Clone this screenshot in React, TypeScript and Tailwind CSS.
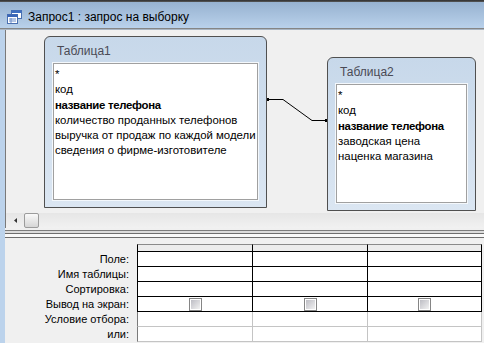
import React from "react";

const font = { fontFamily: '"Liberation Sans", Arial, sans-serif' };

function TableBox({
  title,
  items,
  className,
}: {
  title: string;
  items: { t: string; b?: boolean }[];
  className: string;
}) {
  return (
    <div
      className={
        "absolute flex flex-col border border-[#505050] rounded-t-[6px] bg-gradient-to-b from-[#c7d8ea] to-[#dbe6f2] px-[8px] pb-[7px] " +
        className
      }
    >
      <div className="h-[26px] flex items-center pl-[4px] text-[12px] text-[#4a4a55] pt-[2px]">{title}</div>
      <div className="flex-1 bg-white border border-[#a0a0a0] outline outline-1 outline-[#f4f8fc] pl-[1px] pt-[3px] text-[11.4px] text-black leading-[15.3px]">
        {items.map((it, i) => (
          <div key={i} className={it.b ? "font-bold tracking-[-0.3px] whitespace-nowrap" : "whitespace-nowrap"}>
            {it.t}
          </div>
        ))}
      </div>
    </div>
  );
}

function Checkbox() {
  return (
    <div className="w-[13px] h-[13px] border border-[#858585] bg-white p-[1px]">
      <div className="w-full h-full bg-gradient-to-br from-[#bdbdc4] to-[#f2f2f2]" />
    </div>
  );
}

export default function App() {
  const rows = [
    { label: "Поле:", dark: true },
    { label: "Имя таблицы:", dark: true },
    { label: "Сортировка:", dark: true },
    { label: "Вывод на экран:", dark: true, check: true },
    { label: "Условие отбора:", dark: false },
    { label: "или:", dark: false },
  ];
  return (
    <div className="w-[484px] h-[343px] overflow-hidden bg-[#f0f0f0] flex flex-col" style={font}>
      {/* top border */}
      <div className="h-[2px] bg-gradient-to-b from-[#2e2e2e] to-[#5a5a5a]" />
      {/* title bar */}
      <div className="h-[26px] bg-gradient-to-b from-[#97b2d0] to-[#b9d1eb] flex items-center pl-[7px] pt-[4px]">
        <svg width="15" height="14" viewBox="0 0 15 14" className="mr-[6px]">
          <rect x="4.5" y="0.5" width="10" height="8" fill="#ffffff" stroke="#4a70b0" />
          <rect x="4.5" y="0.5" width="10" height="2.5" fill="#3f6fc0" />
          <rect x="0.5" y="4.5" width="10" height="9" fill="#ffffff" stroke="#4a70b0" />
          <rect x="0.5" y="4.5" width="10" height="2.5" fill="#3a66b8" />
          <line x1="2" y1="9" x2="9" y2="9" stroke="#6a8cc8" />
          <line x1="2" y1="11" x2="9" y2="11" stroke="#6a8cc8" />
          <line x1="4" y1="8" x2="4" y2="13" stroke="#6a8cc8" />
        </svg>
        <span className="text-[12px] text-black">Запрос1 : запрос на выборку</span>
      </div>
      <div className="h-[1px] bg-[#858585]" />
      <div className="h-[1px] bg-[#a9b5c2]" />
      {/* body */}
      <div className="flex-1 flex">
        <div className="w-[5px] bg-[#bcd3ec]" />
        <div className="flex-1 flex flex-col">
          {/* upper pane */}
          <div className="border-l border-[#7a7a7a] flex flex-col">
            <div className="relative h-[183px]">
              <TableBox
                className="left-[38px] top-[6px] w-[223px] h-[172px]"
                title="Таблица1"
                items={[
                  { t: "*" },
                  { t: "код" },
                  { t: "название телефона", b: true },
                  { t: "количество проданных телефонов" },
                  { t: "выручка от продаж по каждой модели" },
                  { t: "сведения о фирме-изготовителе" },
                ]}
              />
              <TableBox
                className="left-[321px] top-[27px] w-[149px] h-[154px]"
                title="Таблица2"
                items={[
                  { t: "*" },
                  { t: "код" },
                  { t: "название телефона", b: true },
                  { t: "заводская цена" },
                  { t: "наценка магазина" },
                ]}
              />
              <svg className="absolute left-0 top-0" width="478" height="183">
                <polyline
                  points="262,69.5 277,69.5 306,90.5 321,90.5"
                  fill="none"
                  stroke="#000"
                  strokeWidth="1"
                />
                <rect x="261" y="68" width="2" height="3" fill="#000" />
                <rect x="319" y="89" width="2" height="3" fill="#000" />
              </svg>
            </div>
            {/* scrollbar */}
            <div className="h-[15px] bg-gradient-to-b from-[#e6e6e6] to-[#f1f1f1] flex items-center">
              <svg width="16" height="15" viewBox="0 0 16 15" className="ml-[1px]">
                <polygon points="10,5 7,7.5 10,10" fill="#333" />
              </svg>
              <div className="w-[15px] h-[15px] ml-[1px] border border-[#9c9c9c] rounded-[2px] bg-gradient-to-b from-[#fafafa] to-[#d6d6d6]" />
            </div>
          </div>
          <div className="h-[2px]" />
          {/* splitter */}
          <div className="h-[1px] bg-[#7c7c7c]" />
          <div className="h-[2px] bg-[#dcdcdc]" />
          <div className="h-[5px] border-y border-[#6e6e6e] bg-[#f9f9f9]" />
          {/* lower pane */}
          <div className="flex-1 pt-[6px] flex flex-col text-[11px] text-black">
            {/* header row */}
            <div className="flex h-[8px]">
              <div className="w-[132px]" />
              {[0, 1, 2].map((i) => (
                <div
                  key={i}
                  className={
                    "w-[115px] border-t border-t-[#8a8a8a] border-b border-b-black border-l border-l-black bg-[#ececec] " +
                    (i === 2 ? "border-r border-r-black" : "")
                  }
                />
              ))}
            </div>
            {rows.map((r, ri) => (
              <div key={ri} className="flex h-[15px]">
                <div className="w-[132px] text-right pr-[8px] leading-[15px] whitespace-nowrap">{r.label}</div>
                {[0, 1, 2].map((i) => (
                  <div
                    key={i}
                    className={
                      "w-[115px] flex items-center justify-center bg-white border-b border-l " +
                      (r.dark
                        ? "border-b-black border-l-black "
                        : "border-b-[#c4c4c4] " + (i === 0 ? "border-l-[#7a7a7a] " : "border-l-[#c4c4c4] ")) +
                      (i === 2 ? (r.dark ? "border-r border-r-black" : "border-r border-r-[#c4c4c4]") : "")
                    }
                  >
                    {r.check ? <Checkbox /> : null}
                  </div>
                ))}
              </div>
            ))}
          </div>
        </div>
      </div>
    </div>
  );
}
